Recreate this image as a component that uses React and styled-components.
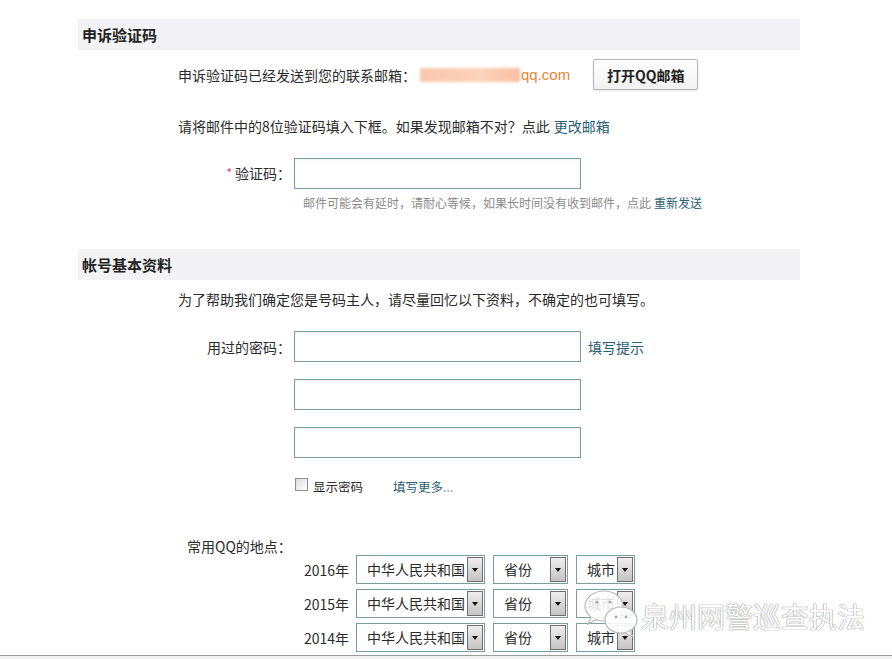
import React from "react";
import styled, { createGlobalStyle } from "styled-components";

const GlobalStyle = createGlobalStyle`
  html, body { margin: 0; padding: 0; background: #ffffff; }
  body {
    font-family: "Noto Sans CJK SC", "Noto Sans", "Liberation Sans", sans-serif;
    color: #2b2b2b;
    font-size: 14px;
  }
  * { box-sizing: border-box; }
`;

const Page = styled.div`
  position: relative;
  width: 892px;
  height: 659px;
  overflow: hidden;
  background: #fff;
  display: flex;
  flex-direction: column;
`;

const Main = styled.div`
  width: 800px;
  padding-left: 78px;
  padding-top: 19px;
  flex: 1;
`;

const SectionHeader = styled.div`
  height: 31px;
  line-height: 31px;
  margin-top: ${(p) => p.$mt || 0}px;
  padding-left: 4px;
  background: #f3f3f5;
  font-size: 15px;
  font-weight: 700;
  color: #222;
`;

const Indented = styled.div`
  margin-top: ${(p) => p.$mt || 0}px;
  padding-left: ${(p) => (p.$pl != null ? p.$pl : 100)}px;
  line-height: ${(p) => p.$lh || 20}px;
  font-size: 14px;
  display: flex;
  align-items: center;
  white-space: nowrap;
`;

const EmailRow = styled(Indented)`
  height: 31px;
`;

const BlurredEmail = styled.span`
  display: inline-block;
  width: 100px;
  height: 14px;
  margin-left: 4px;
  background: linear-gradient(90deg, #f9c7ad, #fbd2bb 60%, #f8c0a3);
  filter: blur(1.5px);
`;

const Domain = styled.span`
  font-family: "Liberation Sans", Arial, sans-serif;
  font-size: 15px;
  color: #ee8434;
  margin-left: 1px;
`;

const OpenButton = styled.button`
  margin-left: 23px;
  width: 105px;
  height: 31px;
  border: 1px solid #b4b4b4;
  border-radius: 2px;
  background: linear-gradient(#ffffff, #f1f1f1);
  box-shadow: 0 1px 2px rgba(0, 0, 0, 0.12);
  font-family: "Noto Sans CJK SC", sans-serif;
  font-size: 14px;
  font-weight: 700;
  color: #222;
  padding: 0;
`;

const Link = styled.a`
  color: #2a5e72;
  text-decoration: none;
  margin-left: ${(p) => p.$ml || 0}px;
`;

const FormRow = styled.div`
  display: grid;
  grid-template-columns: 213px 287px auto;
  column-gap: 3px;
  align-items: center;
  margin-top: ${(p) => p.$mt || 0}px;
`;

const Label = styled.div`
  text-align: right;
  font-size: 14px;
  line-height: 20px;
  white-space: nowrap;
`;

const Star = styled.span`
  color: #d24a6a;
  font-size: 12px;
  margin-right: 3px;
  position: relative;
  top: -1px;
`;

const TextInput = styled.input`
  width: 287px;
  height: 31px;
  border: 1px solid #7d9c9c;
  background: #fff;
  box-shadow: inset 0 1px 2px rgba(120, 160, 160, 0.15);
  outline: none;
  padding: 0 6px;
  font-size: 14px;
`;

const Side = styled.div`
  padding-left: 4px;
  font-size: 14px;
  white-space: nowrap;
`;

const Hint = styled.div`
  grid-column: 2 / span 2;
  padding-left: 9px;
  font-size: 12px;
  line-height: 16px;
  color: #8a8a8a;
  white-space: nowrap;
`;

const CheckRow = styled.div`
  margin-top: 20px;
  padding-left: 217px;
  height: 16px;
  display: flex;
  align-items: center;
  font-size: 12.5px;
  white-space: nowrap;
`;

const Check = styled.span`
  display: inline-block;
  width: 13px;
  height: 13px;
  border: 1px solid #8e8e8e;
  background: linear-gradient(135deg, #dcdcdc, #ffffff);
  margin-right: 5px;
  position: relative;
  top: -2px;
`;

const MoreLink = styled(Link)`
  margin-left: 30px;
  span { color: #999; }
`;

const LocLabel = styled.div`
  margin-top: 44px;
  padding-left: 109px;
  font-size: 14px;
  line-height: 17px;
`;

const LocRows = styled.div`
  display: flex;
  flex-direction: column;
  gap: 5px;
  padding-left: 226px;
`;

const LocRow = styled.div`
  display: flex;
  align-items: center;
  height: 29px;
`;

const Year = styled.span`
  width: 52px;
  font-size: 14px;
  white-space: nowrap;
`;

const SelectBox = styled.div`
  width: ${(p) => p.$w}px;
  height: 29px;
  margin-right: 8px;
  border: 1px solid #7d9c9c;
  background: #fff;
  display: flex;
  align-items: stretch;
  padding: 1px;
`;

const SelectText = styled.span`
  flex: 1;
  padding-left: 9px;
  font-size: 14px;
  line-height: 25px;
  white-space: nowrap;
  overflow: hidden;
`;

const Arrow = styled.span`
  width: 16px;
  border: 1px solid #6e6e6e;
  background: linear-gradient(#eeeeee, #c4c4c4);
  display: flex;
  align-items: center;
  justify-content: center;
  &::after {
    content: "";
    border-left: 3px solid transparent;
    border-right: 3px solid transparent;
    border-top: 4px solid #111;
  }
`;

const Footer = styled.div`
  height: 4px;
  border-top: 1px solid #9c9c9c;
  background: #f3f3f3;
`;

const Watermark = styled.div`
  position: absolute;
  left: 583px;
  top: 588px;
  display: flex;
  align-items: center;
  pointer-events: none;
`;

const WatermarkText = styled.span`
  margin-left: 2px;
  margin-top: 6px;
  font-size: 28px;
  color: #ffffff;
  text-shadow: 0 0 1px #999, 0 0 1px #999, 0 0 1px #aaa;
  white-space: nowrap;
`;

function Select({ w, text }) {
  return (
    <SelectBox $w={w}>
      <SelectText>{text}</SelectText>
      <Arrow />
    </SelectBox>
  );
}

function WeChatMark() {
  return (
    <svg width="56" height="50" viewBox="0 0 56 50">
      <ellipse cx="21" cy="18" rx="19" ry="15" fill="rgba(255,255,255,0.85)" stroke="#b8b8b8" strokeWidth="1.2" />
      <path d="M8 29 L5 36 L14 31" fill="rgba(255,255,255,0.85)" stroke="#b8b8b8" strokeWidth="1.2" />
      <circle cx="14" cy="14" r="1.6" fill="#aaa" />
      <circle cx="27" cy="14" r="1.6" fill="#aaa" />
      <ellipse cx="38" cy="32" rx="16" ry="13" fill="rgba(255,255,255,0.9)" stroke="#b8b8b8" strokeWidth="1.2" />
      <path d="M47 43 L50 49 L42 45" fill="rgba(255,255,255,0.9)" stroke="#b8b8b8" strokeWidth="1.2" />
      <circle cx="33" cy="29" r="1.4" fill="#aaa" />
      <circle cx="43" cy="29" r="1.4" fill="#aaa" />
    </svg>
  );
}

const years = ["2016年", "2015年", "2014年"];

export default function App() {
  return (
    <>
      <GlobalStyle />
      <Page>
        <Main>
          <SectionHeader>申诉验证码</SectionHeader>
          <EmailRow $mt={9}>
            申诉验证码已经发送到您的联系邮箱：
            <BlurredEmail />
            <Domain>qq.com</Domain>
            <OpenButton>打开QQ邮箱</OpenButton>
          </EmailRow>
          <Indented $mt={26}>
            请将邮件中的8位验证码填入下框。如果发现邮箱不对？点此
            <Link $ml={4}>更改邮箱</Link>
          </Indented>
          <FormRow $mt={22}>
            <Label>
              <Star>*</Star>验证码：
            </Label>
            <TextInput />
            <span />
          </FormRow>
          <FormRow $mt={6}>
            <span />
            <Hint>
              邮件可能会有延时，请耐心等候，如果长时间没有收到邮件，点此
              <Link $ml={3}>重新发送</Link>
            </Hint>
          </FormRow>

          <SectionHeader $mt={38}>帐号基本资料</SectionHeader>
          <Indented $mt={9}>
            为了帮助我们确定您是号码主人，请尽量回忆以下资料，不确定的也可填写。
          </Indented>
          <FormRow $mt={22}>
            <Label>用过的密码：</Label>
            <TextInput type="password" />
            <Side>
              <Link>填写提示</Link>
            </Side>
          </FormRow>
          <FormRow $mt={17}>
            <span />
            <TextInput type="password" />
            <span />
          </FormRow>
          <FormRow $mt={17}>
            <span />
            <TextInput type="password" />
            <span />
          </FormRow>
          <CheckRow>
            <Check />
            显示密码
            <MoreLink>
              填写更多<span>...</span>
            </MoreLink>
          </CheckRow>
          <LocLabel>常用QQ的地点：</LocLabel>
          <LocRows>
            {years.map((y) => (
              <LocRow key={y}>
                <Year>{y}</Year>
                <Select w={129} text="中华人民共和国" />
                <Select w={75} text="省份" />
                <Select w={59} text="城市" />
              </LocRow>
            ))}
          </LocRows>
        </Main>
        <Footer />
        <Watermark>
          <WeChatMark />
          <WatermarkText>泉州网警巡查执法</WatermarkText>
        </Watermark>
      </Page>
    </>
  );
}
